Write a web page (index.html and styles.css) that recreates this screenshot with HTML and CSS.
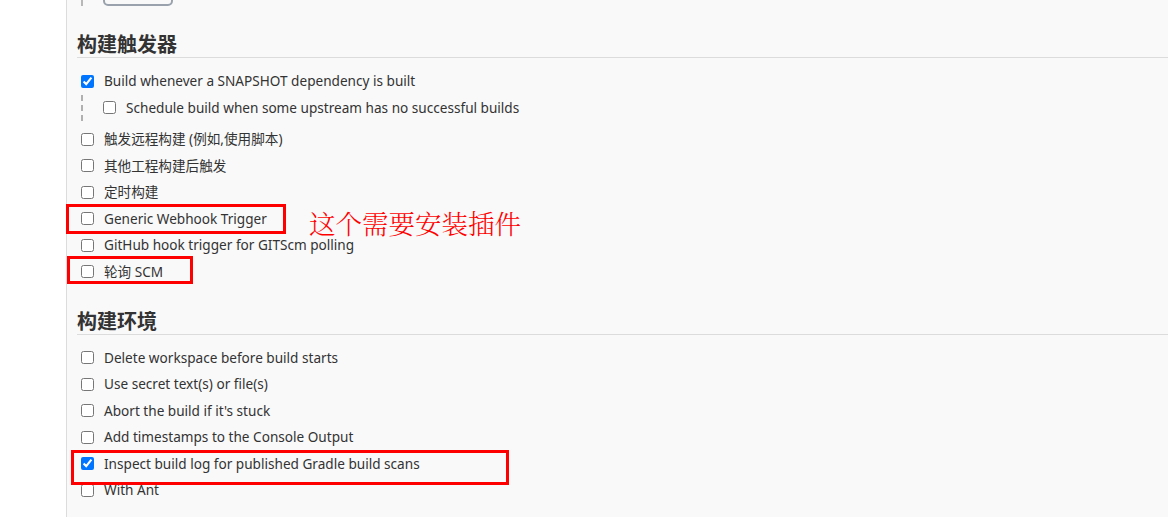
FILE: index.html
```html
<!DOCTYPE html>
<html lang="zh-CN">
<head>
<meta charset="utf-8">
<title>构建触发器</title>
<link rel="stylesheet" href="styles.css">
</head>
<body>
<div class="page">
  <aside class="side"></aside>
  <main class="main">
    <div class="top-frag">
      <span class="frag-line"></span>
      <span class="frag-btn"></span>
    </div>

    <section class="section">
      <h2 class="section-title">构建触发器</h2>
      <div class="rows">
        <label class="row"><input type="checkbox" checked><span>Build whenever a SNAPSHOT dependency is built</span></label>
        <div class="nested">
          <label class="row"><input type="checkbox"><span>Schedule build when some upstream has no successful builds</span></label>
        </div>
        <label class="row"><input type="checkbox"><span>触发远程构建 (例如,使用脚本)</span></label>
        <label class="row"><input type="checkbox"><span>其他工程构建后触发</span></label>
        <label class="row"><input type="checkbox"><span>定时构建</span></label>
        <label class="row"><input type="checkbox"><span>Generic Webhook Trigger</span></label>
        <label class="row"><input type="checkbox"><span>GitHub hook trigger for GITScm polling</span></label>
        <label class="row"><input type="checkbox"><span>轮询 SCM</span></label>
      </div>
    </section>

    <section class="section">
      <h2 class="section-title">构建环境</h2>
      <div class="rows">
        <label class="row"><input type="checkbox"><span>Delete workspace before build starts</span></label>
        <label class="row"><input type="checkbox"><span>Use secret text(s) or file(s)</span></label>
        <label class="row"><input type="checkbox"><span>Abort the build if it's stuck</span></label>
        <label class="row"><input type="checkbox"><span>Add timestamps to the Console Output</span></label>
        <label class="row"><input type="checkbox" checked><span>Inspect build log for published Gradle build scans</span></label>
        <label class="row"><input type="checkbox"><span>With Ant</span></label>
      </div>
    </section>
  </main>

  <div class="mark mark-1"></div>
  <div class="mark mark-2"></div>
  <div class="mark mark-3"></div>
  <div class="note">这个需要安装插件</div>
</div>
</body>
</html>
```

FILE: styles.css
```css
html, body {
  margin: 0;
  padding: 0;
  height: 100%;
  overflow: hidden;
}

body {
  font-family: "Noto Sans", "Noto Sans CJK SC", sans-serif;
  color: #333;
  background: #f9f9f9;
}

.page {
  position: relative;
  display: flex;
  min-height: 517px;
}

.side {
  width: 66px;
  flex: none;
  background: #fff;
  border-right: 1px solid #dcdcdc;
}

.main {
  flex: 1;
  padding-left: 10px;
}

.top-frag {
  height: 6px;
  display: flex;
  align-items: flex-end;
  overflow: hidden;
}

.frag-line {
  width: 0;
  height: 6px;
  margin-left: 4px;
  border-left: 2px solid #b8b8b8;
}

.frag-btn {
  width: 70px;
  height: 30px;
  margin-left: 20px;
  border: 2px solid #9aa3ad;
  border-radius: 5px;
  background: #f9f9f9;
  box-sizing: border-box;
}

.section {
  margin-top: 25px;
}

.section + .section {
  margin-top: 22.5px;
}

.section-title {
  margin: 0;
  font-family: "Noto Sans CJK SC", sans-serif;
  font-size: 20px;
  font-weight: 700;
  line-height: 26px;
  color: #333;
  border-bottom: 1px solid #dcdcdc;
}

.rows {
  padding-top: 10px;
}

.row {
  display: flex;
  align-items: center;
  height: 26.5px;
  font-size: 13.6px;
  line-height: 18px;
  color: #333;
}

.row input {
  width: 13px;
  height: 13px;
  margin: 0 7px 0 4px;
  flex: none;
}

.row span {
  margin-left: 3px;
  white-space: nowrap;
}

.nested {
  margin-left: 4px;
  margin-bottom: 5px;
  padding-left: 16px;
  border-left: 2px dashed #b0b0b0;
}

.mark {
  position: absolute;
  border: 3px solid #f00;
  box-sizing: border-box;
}

.mark-1 { left: 66px; top: 204px; width: 220px; height: 30px; }
.mark-2 { left: 67px; top: 256px; width: 126px; height: 28px; }
.mark-3 { left: 71px; top: 450px; width: 438px; height: 35px; }

.note {
  position: absolute;
  left: 309px;
  top: 205px;
  font-family: "Noto Serif CJK SC", "Noto Sans CJK SC", serif;
  font-size: 26.5px;
  font-weight: 300;
  line-height: 36px;
  color: #f00;
}
```
